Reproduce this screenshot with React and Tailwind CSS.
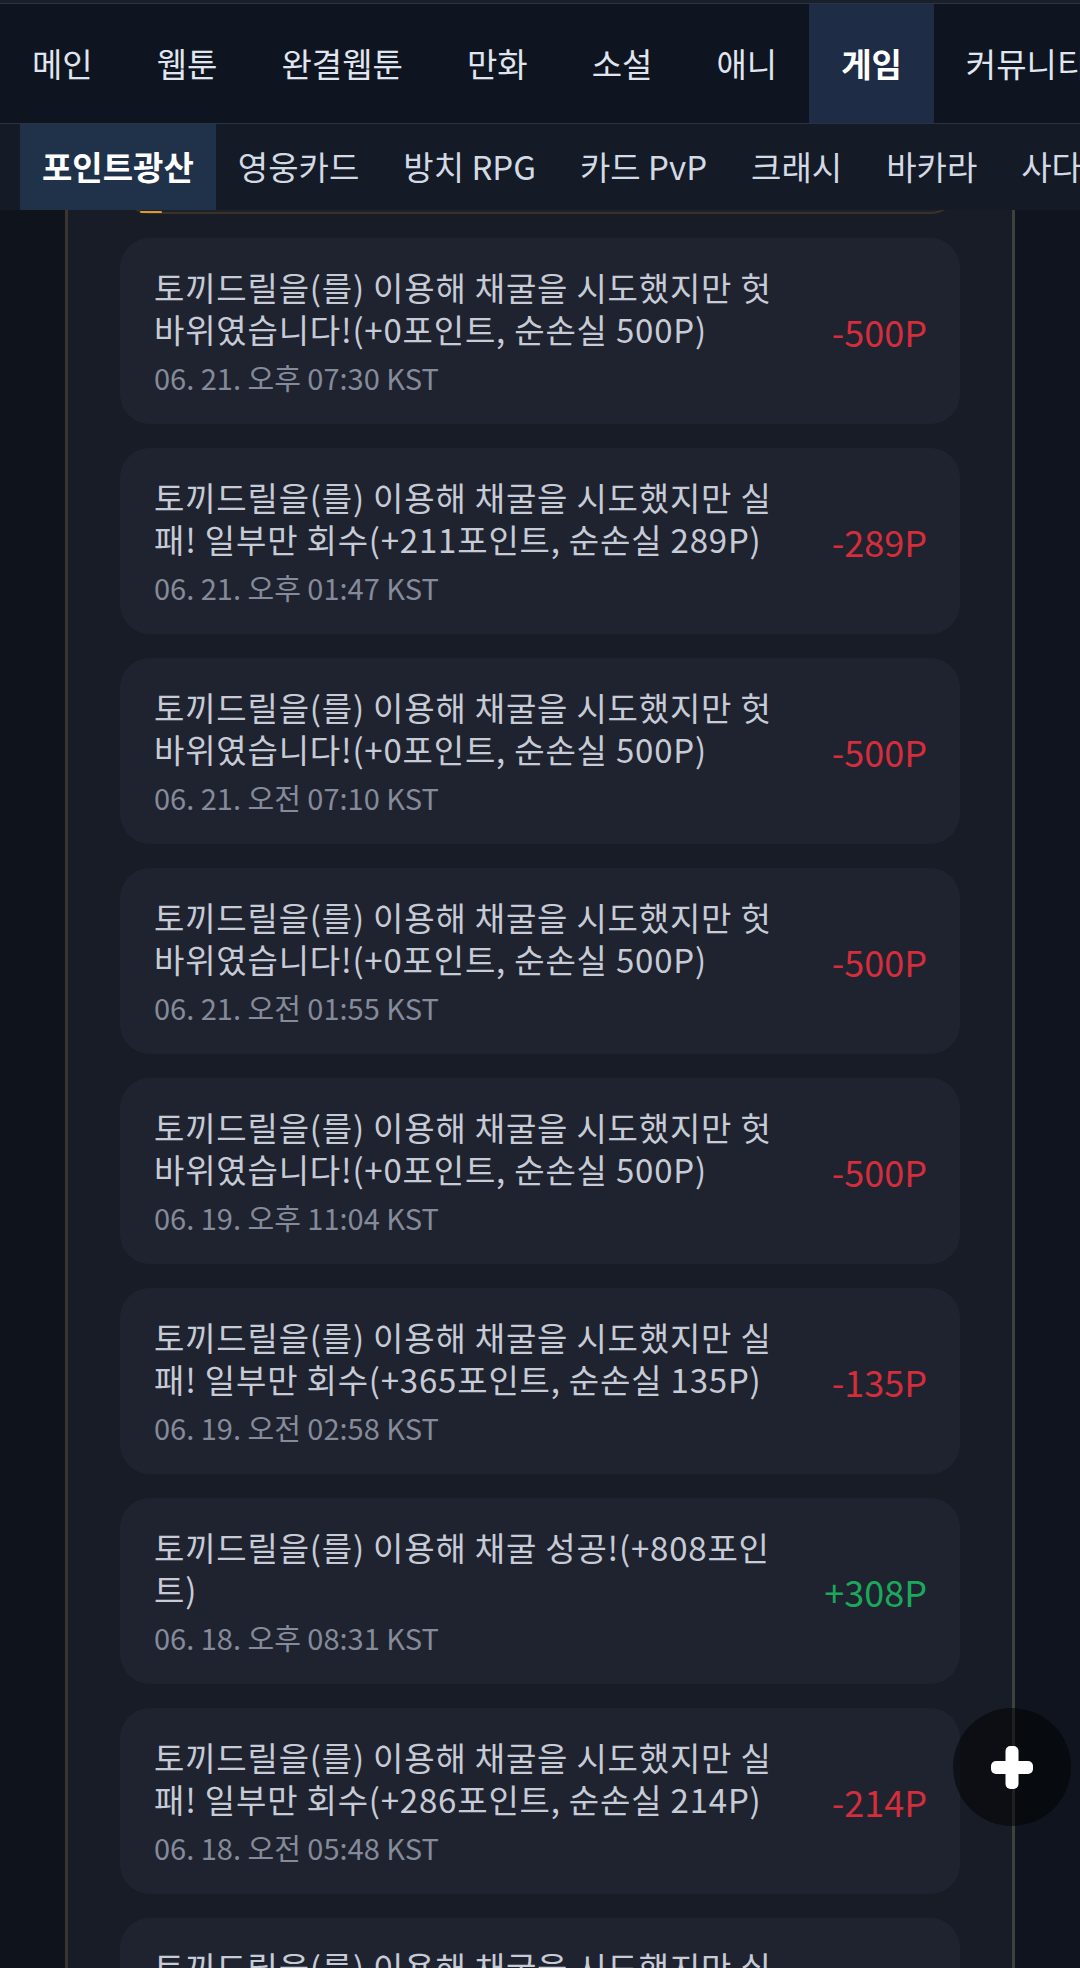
import React from "react";

const mainTabs = ["메인", "웹툰", "완결웹툰", "만화", "소설", "애니", "게임", "커뮤니티"];
const gameTabs = ["포인트광산", "영웅카드", "방치 RPG", "카드 PvP", "크래시", "바카라", "사다리"];

const BUST = "토끼드릴을(를) 이용해 채굴을 시도했지만 헛바위였습니다!(+0포인트, 순손실 500P)";
const partial = (got, lost) =>
  `토끼드릴을(를) 이용해 채굴을 시도했지만 실패! 일부만 회수(+${got}포인트, 순손실 ${lost}P)`;

const logs = [
  { text: BUST, amount: -500, date: "06. 21. 오후 07:30 KST" },
  { text: partial(211, 289), amount: -289, date: "06. 21. 오후 01:47 KST" },
  { text: BUST, amount: -500, date: "06. 21. 오전 07:10 KST" },
  { text: BUST, amount: -500, date: "06. 21. 오전 01:55 KST" },
  { text: BUST, amount: -500, date: "06. 19. 오후 11:04 KST" },
  { text: partial(365, 135), amount: -135, date: "06. 19. 오전 02:58 KST" },
  { text: "토끼드릴을(를) 이용해 채굴 성공!(+808포인트)", amount: 308, date: "06. 18. 오후 08:31 KST" },
  { text: partial(286, 214), amount: -214, date: "06. 18. 오전 05:48 KST" },
  { text: partial(302, 198), amount: -198, date: "06. 17. 오후 10:22 KST" },
];

function LogCard({ item }) {
  const gain = item.amount > 0;
  return (
    <div className="flex h-[186px] shrink-0 items-center rounded-[30px] bg-[#1f2330] pl-[34px] pr-[33px]">
      <div className="min-w-0 flex-1">
        <p className="text-[33px] leading-[42px] tracking-[0.8px] text-[#c6cbd6]">{item.text}</p>
        <p className="mt-[8px] text-[29px] leading-[38px] text-[#858b9a]">{item.date}</p>
      </div>
      <div
        className={`ml-[48px] shrink-0 text-[36px] leading-none ${
          gain ? "text-[#1aa95b]" : "text-[#d42d3c]"
        }`}
      >
        {gain ? `+${item.amount}P` : `${item.amount}P`}
      </div>
    </div>
  );
}

export default function App() {
  return (
    <div className="relative h-[1968px] w-[1080px] overflow-hidden bg-[#0e131c] font-['Noto_Sans_CJK_KR','Noto_Sans',sans-serif]">
      {/* top strip */}
      <div className="h-[4px] border-b border-[#2b3441] bg-[#19202b]" />

      {/* main tabs */}
      <nav className="flex h-[120px] overflow-hidden whitespace-nowrap border-b border-[#2a3240] bg-[#0f1520]">
        {mainTabs.map((tab) => (
          <div
            key={tab}
            className={`flex shrink-0 items-center px-[32px] text-[33px] ${
              tab === "게임" ? "bg-[#1e2d45] font-bold text-white" : "text-[#e0e6ef]"
            }`}
          >
            {tab}
          </div>
        ))}
      </nav>

      {/* game tabs */}
      <div className="flex h-[86px] overflow-hidden whitespace-nowrap bg-[#141b27] pl-[20px]">
        {gameTabs.map((tab) => (
          <div
            key={tab}
            className={`flex shrink-0 items-center px-[22px] text-[33px] ${
              tab === "포인트광산" ? "bg-[#1f3249] font-bold text-white" : "text-[#d3dae4]"
            }`}
          >
            {tab}
          </div>
        ))}
      </div>

      {/* body */}
      <div className="flex">
        <div className="w-[65px] shrink-0 bg-[#0e131c]" />
        <main className="flex h-[1760px] w-[950px] shrink-0 flex-col gap-[24px] overflow-hidden border-x-[3px] border-l-[#3a3530] border-r-[#3b4240] bg-[#181c26] px-[52px]">
          {/* bottom of the card above, scrolled off */}
          <div className="relative -mt-[56px] h-[60px] shrink-0 rounded-[30px] border-2 border-[#3a3127] bg-[#1d212b]">
            <span className="absolute bottom-[-1px] left-[18px] h-[2px] w-[22px] rounded-full bg-[#d99a32]" />
          </div>
          {logs.map((item, i) => (
            <LogCard key={i} item={item} />
          ))}
        </main>
        <div className="flex-1 bg-[#0f141e]" />
      </div>

      {/* floating add button */}
      <button className="absolute left-[953px] top-[1708px] flex h-[118px] w-[118px] items-center justify-center rounded-full bg-black/50">
        <svg width="42" height="43" viewBox="0 0 42 43">
          <rect x="14.5" y="0" width="13" height="43" rx="5" fill="#fff" />
          <rect x="0" y="15" width="42" height="13" rx="5" fill="#fff" />
        </svg>
      </button>
    </div>
  );
}
